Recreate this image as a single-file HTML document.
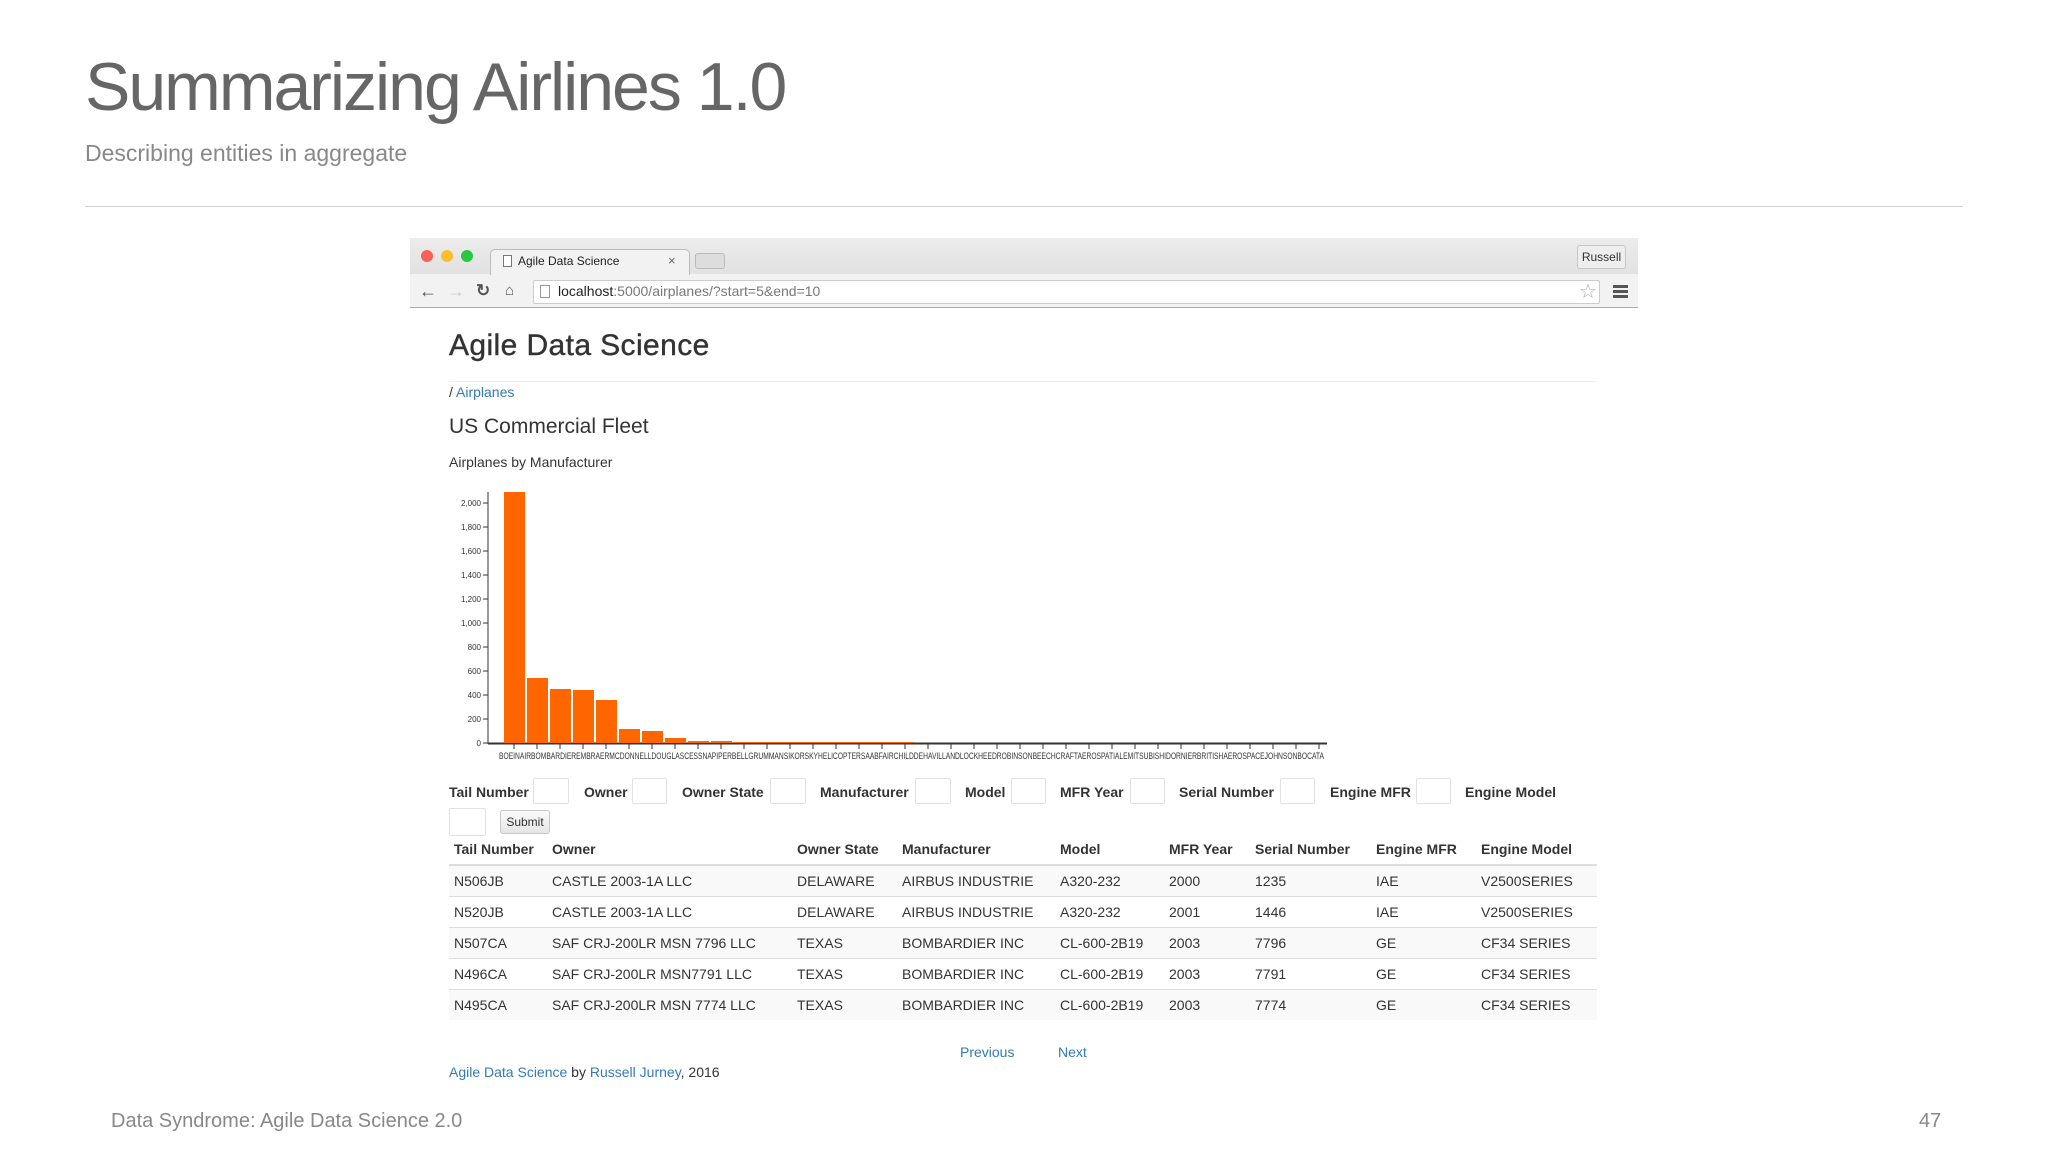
<!DOCTYPE html>
<html><head><meta charset="utf-8"><style>
*{margin:0;padding:0;box-sizing:border-box}
body{width:2048px;height:1152px;background:#fff;position:relative;overflow:hidden;font-family:"Liberation Sans",sans-serif}
.a{position:absolute;white-space:nowrap}
.t{font-family:"Liberation Sans",sans-serif;color:#333}
.lbl{font-size:14px;font-weight:bold;color:#333;top:784px}
.inp{position:absolute;height:26px;border:1px solid #e2e2e2;background:#fff;border-radius:2px}
th,td{font-size:14px;color:#333;text-align:left;padding:0}
a{color:#337ab7;text-decoration:none}
</style></head><body>
<div class="a" style="left:85px;top:48px;font-size:68px;color:#666;letter-spacing:-2px">Summarizing Airlines 1.0</div>
<div class="a" style="left:85px;top:140px;font-size:23px;color:#888">Describing entities in aggregate</div>
<div class="a" style="left:85px;top:206px;width:1878px;height:1px;background:#d0d0d0"></div>

<!-- browser chrome -->
<div class="a" style="left:410px;top:238px;width:1228px;height:70px;background:linear-gradient(#ececec,#d8d8d8);border-bottom:1px solid #b5b5b5"></div>
<div class="a" style="left:410px;top:274px;width:1228px;height:34px;background:#f2f2f2;border-bottom:1px solid #aaa"></div>
<div class="a" style="left:421px;top:250px;width:12px;height:12px;border-radius:50%;background:#fc5f57"></div>
<div class="a" style="left:441px;top:250px;width:12px;height:12px;border-radius:50%;background:#fdbc2e"></div>
<div class="a" style="left:461px;top:250px;width:12px;height:12px;border-radius:50%;background:#29c840"></div>
<div class="a" style="left:490px;top:249px;width:200px;height:26px;background:#f2f2f2;border:1px solid #bbb;border-bottom:none;border-radius:5px 5px 0 0"></div>
<div class="a" style="left:503px;top:255px;width:9px;height:12px;border:1px solid #777;background:#fff"></div>
<div class="a" style="left:518px;top:254px;font-size:12px;color:#222">Agile Data Science</div>
<div class="a" style="left:668px;top:253px;font-size:13px;color:#666">×</div>
<div class="a" style="left:695px;top:253px;width:30px;height:16px;background:#ddd;border:1px solid #bbb;border-radius:3px"></div>
<div class="a" style="left:1577px;top:245px;width:49px;height:24px;border:1px solid #c6c6c6;border-radius:3px;background:#eee;font-size:12px;color:#333;text-align:center;line-height:22px">Russell</div>
<div class="a" style="left:419px;top:281px;font-size:18px;color:#555;font-weight:bold">&#8592;</div>
<div class="a" style="left:447px;top:281px;font-size:18px;color:#ccc;font-weight:bold">&#8594;</div>
<div class="a" style="left:476px;top:281px;font-size:17px;color:#555;font-weight:bold">&#8635;</div>
<div class="a" style="left:505px;top:282px;font-size:15px;color:#555">&#8962;</div>
<div class="a" style="left:533px;top:280px;width:1067px;height:24px;background:#fff;border:1px solid #ccc;border-radius:2px"></div>
<div class="a" style="left:540px;top:285px;width:10px;height:13px;border:1px solid #999"></div>
<div class="a" style="left:558px;top:283px;font-size:14px;color:#222">localhost<span style="color:#777">:5000/airplanes/?start=5&amp;end=10</span></div>
<div class="a" style="left:1579px;top:279px;font-size:20px;color:#aaa">☆</div>
<div class="a" style="left:1613px;top:285px;width:15px;height:3px;background:#555;box-shadow:0 5px 0 #555,0 10px 0 #555"></div>

<!-- page content -->
<div class="a t" style="left:449px;top:329px;font-size:30px;letter-spacing:0.4px;-webkit-text-stroke:0.4px #333">Agile Data Science</div>
<div class="a" style="left:449px;top:381px;width:1148px;height:1px;background:#eee"></div>
<div class="a t" style="left:449px;top:384px;font-size:14px">/ <a>Airplanes</a></div>
<div class="a t" style="left:449px;top:415px;font-size:21px">US Commercial Fleet</div>
<div class="a t" style="left:449px;top:454px;font-size:14px">Airplanes by Manufacturer</div>

<svg class="a" style="left:440px;top:485px" width="900" height="280" viewBox="440 485 900 280">
<g font-family="Liberation Sans" font-size="8" fill="#333" text-anchor="end">
<text x="481" y="506">2,000</text><text x="481" y="530">1,800</text><text x="481" y="554">1,600</text><text x="481" y="578">1,400</text><text x="481" y="602">1,200</text><text x="481" y="626">1,000</text><text x="481" y="650">800</text><text x="481" y="674">600</text><text x="481" y="698">400</text><text x="481" y="722">200</text><text x="481" y="746">0</text>
</g>
<g stroke="#333" stroke-width="1">
<line x1="488" y1="492" x2="488" y2="744"/>
<line x1="483" y1="503" x2="488" y2="503"/><line x1="483" y1="527" x2="488" y2="527"/><line x1="483" y1="551" x2="488" y2="551"/><line x1="483" y1="575" x2="488" y2="575"/><line x1="483" y1="599" x2="488" y2="599"/><line x1="483" y1="623" x2="488" y2="623"/><line x1="483" y1="647" x2="488" y2="647"/><line x1="483" y1="671" x2="488" y2="671"/><line x1="483" y1="695" x2="488" y2="695"/><line x1="483" y1="719" x2="488" y2="719"/><line x1="483" y1="743" x2="488" y2="743"/>
<line x1="488" y1="743.5" x2="1327" y2="743.5" stroke-width="2"/>
</g>
<g fill="#ff6600">
<rect x="504" y="492" width="21" height="251"/>
<rect x="527" y="678" width="21" height="65"/>
<rect x="550" y="689" width="21" height="54"/>
<rect x="573" y="690" width="21" height="53"/>
<rect x="596" y="700" width="21" height="43"/>
<rect x="619" y="729" width="21" height="14"/>
<rect x="642" y="731" width="21" height="12"/>
<rect x="665" y="738" width="21" height="5"/>
<rect x="688" y="741" width="21" height="2"/>
<rect x="711" y="741" width="21" height="2"/>
<rect x="734" y="742" width="180" height="1"/>
</g>
<g stroke="#333"><path d="M514 744v5M537 744v5M560 744v5M583 744v5M606 744v5M629 744v5M652 744v5M675 744v5M698 744v5M721 744v5M744 744v5M767 744v5M790 744v5M813 744v5M836 744v5M859 744v5M882 744v5M905 744v5M928 744v5M951 744v5M974 744v5M997 744v5M1020 744v5M1043 744v5M1066 744v5M1089 744v5M1112 744v5M1135 744v5M1158 744v5M1181 744v5M1204 744v5M1227 744v5M1250 744v5M1273 744v5M1296 744v5M1319 744v5"/></g>
<text x="499" y="759" font-family="Liberation Sans" font-size="9" fill="#333" textLength="825" lengthAdjust="spacingAndGlyphs">BOEINAIRBOMBARDIEREMBRAERMCDONNELLDOUGLASCESSNAPIPERBELLGRUMMANSIKORSKYHELICOPTERSAABFAIRCHILDDEHAVILLANDLOCKHEEDROBINSONBEECHCRAFTAEROSPATIALEMITSUBISHIDORNIERBRITISHAEROSPACEJOHNSONBOCATA</text>
</svg>

<!-- form -->
<div class="a lbl" style="left:449px">Tail Number</div><div class="inp" style="left:533px;top:778px;width:36px"></div>
<div class="a lbl" style="left:584px">Owner</div><div class="inp" style="left:632px;top:778px;width:35px"></div>
<div class="a lbl" style="left:682px">Owner State</div><div class="inp" style="left:770px;top:778px;width:36px"></div>
<div class="a lbl" style="left:820px">Manufacturer</div><div class="inp" style="left:915px;top:778px;width:36px"></div>
<div class="a lbl" style="left:965px">Model</div><div class="inp" style="left:1011px;top:778px;width:35px"></div>
<div class="a lbl" style="left:1060px">MFR Year</div><div class="inp" style="left:1130px;top:778px;width:35px"></div>
<div class="a lbl" style="left:1179px">Serial Number</div><div class="inp" style="left:1280px;top:778px;width:35px"></div>
<div class="a lbl" style="left:1330px">Engine MFR</div><div class="inp" style="left:1416px;top:778px;width:35px"></div>
<div class="a lbl" style="left:1465px">Engine Model</div>
<div class="inp" style="left:449px;top:808px;width:37px;height:28px"></div>
<div class="a" style="left:500px;top:810px;width:50px;height:24px;border:1px solid #c8c8c8;border-radius:3px;background:linear-gradient(#fafafa,#e6e6e6);font-size:12px;color:#333;text-align:center;line-height:22px">Submit</div>

<!-- table -->
<table class="a" style="left:449px;top:834px;width:1148px;border-collapse:collapse">
<colgroup><col style="width:103px"><col style="width:245px"><col style="width:105px"><col style="width:158px"><col style="width:109px"><col style="width:86px"><col style="width:121px"><col style="width:105px"><col></colgroup>
<tr style="height:31px;border-bottom:2px solid #ddd"><th style="padding-left:5px">Tail Number</th><th>Owner</th><th>Owner State</th><th>Manufacturer</th><th>Model</th><th>MFR Year</th><th>Serial Number</th><th>Engine MFR</th><th>Engine Model</th></tr>
<tr style="height:31px;background:#f9f9f9;border-top:1px solid #ddd"><td style="padding-left:5px">N506JB</td><td>CASTLE 2003-1A LLC</td><td>DELAWARE</td><td>AIRBUS INDUSTRIE</td><td>A320-232</td><td>2000</td><td>1235</td><td>IAE</td><td>V2500SERIES</td></tr>
<tr style="height:31px;border-top:1px solid #ddd"><td style="padding-left:5px">N520JB</td><td>CASTLE 2003-1A LLC</td><td>DELAWARE</td><td>AIRBUS INDUSTRIE</td><td>A320-232</td><td>2001</td><td>1446</td><td>IAE</td><td>V2500SERIES</td></tr>
<tr style="height:31px;background:#f9f9f9;border-top:1px solid #ddd"><td style="padding-left:5px">N507CA</td><td>SAF CRJ-200LR MSN 7796 LLC</td><td>TEXAS</td><td>BOMBARDIER INC</td><td>CL-600-2B19</td><td>2003</td><td>7796</td><td>GE</td><td>CF34 SERIES</td></tr>
<tr style="height:31px;border-top:1px solid #ddd"><td style="padding-left:5px">N496CA</td><td>SAF CRJ-200LR MSN7791 LLC</td><td>TEXAS</td><td>BOMBARDIER INC</td><td>CL-600-2B19</td><td>2003</td><td>7791</td><td>GE</td><td>CF34 SERIES</td></tr>
<tr style="height:31px;background:#f9f9f9;border-top:1px solid #ddd"><td style="padding-left:5px">N495CA</td><td>SAF CRJ-200LR MSN 7774 LLC</td><td>TEXAS</td><td>BOMBARDIER INC</td><td>CL-600-2B19</td><td>2003</td><td>7774</td><td>GE</td><td>CF34 SERIES</td></tr>
</table>

<div class="a" style="left:960px;top:1044px;font-size:14px"><a>Previous</a></div>
<div class="a" style="left:1058px;top:1044px;font-size:14px"><a>Next</a></div>
<div class="a t" style="left:449px;top:1064px;font-size:14px"><a>Agile Data Science</a> by <a>Russell Jurney</a>, 2016</div>

<div class="a" style="left:111px;top:1110px;font-size:20px;color:#888">Data Syndrome: Agile Data Science 2.0</div>
<div class="a" style="left:1919px;top:1110px;font-size:20px;color:#888">47</div>
</body></html>
